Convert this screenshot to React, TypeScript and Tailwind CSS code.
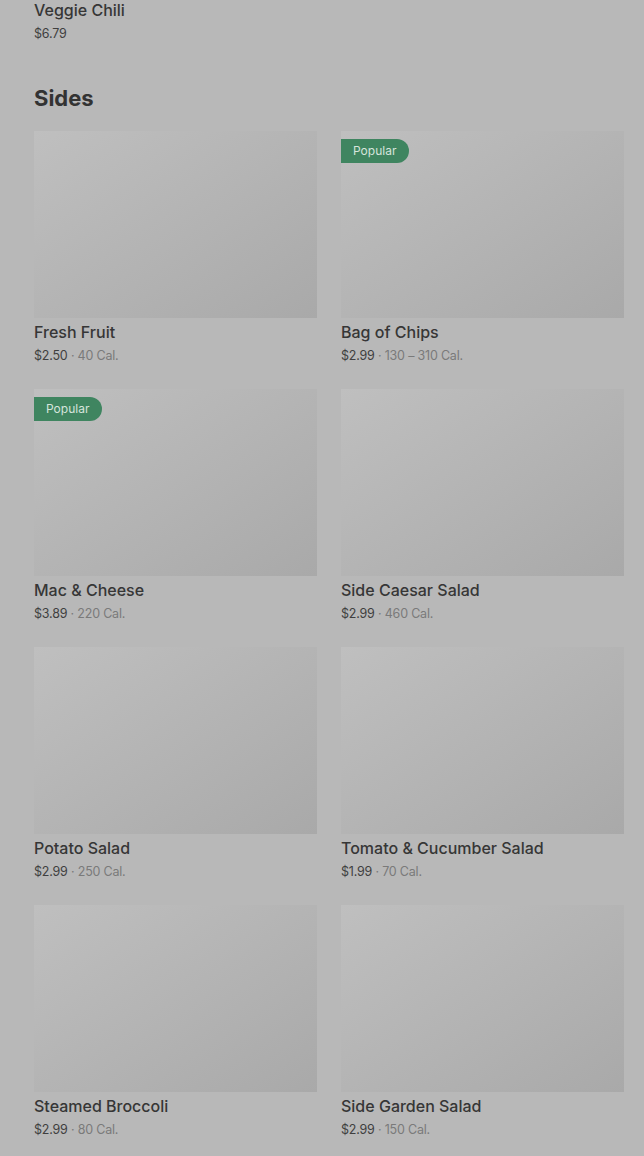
import React from 'react'

interface MenuItem {
    name: string;
    price: string;
    cal?: string;
    popular?: boolean;
}

const sides: MenuItem[] = [
    { name: 'Fresh Fruit', price: '$2.50', cal: '40 Cal.' },
    { name: 'Bag of Chips', price: '$2.99', cal: '130 – 310 Cal.', popular: true },
    { name: 'Mac & Cheese', price: '$3.89', cal: '220 Cal.', popular: true },
    { name: 'Side Caesar Salad', price: '$2.99', cal: '460 Cal.' },
    { name: 'Potato Salad', price: '$2.99', cal: '250 Cal.' },
    { name: 'Tomato & Cucumber Salad', price: '$1.99', cal: '70 Cal.' },
    { name: 'Steamed Broccoli', price: '$2.99', cal: '80 Cal.' },
    { name: 'Side Garden Salad', price: '$2.99', cal: '150 Cal.' },
]

function PriceLine({ item }: { item: MenuItem }) {
    return (
        <div className="mt-[4px] text-[12.5px] leading-[20px] tracking-[-0.2px] text-[#3f3f3f]">
            {item.price}
            {item.cal && (
                <span className="text-[#7a7a7a]"> · {item.cal}</span>
            )}
        </div>
    )
}

function ItemCard({ item }: { item: MenuItem }) {
    return (
        <div className="flex flex-col">
            <div className="relative h-[187px] bg-linear-to-br from-[#bfbfbf] to-[#a9a9a9]">
                {item.popular && (
                    <span className="absolute left-0 top-2 flex h-6 items-center rounded-r-full bg-[#3f8560] pl-3 pr-[13px] text-[12px] text-[#d6e4dc]">
                        Popular
                    </span>
                )}
            </div>
            <div className="mt-1 text-[16px] leading-[20px] font-medium text-[#363636]">{item.name}</div>
            <PriceLine item={item} />
        </div>
    )
}

export default function App() {
    return (
        <div
            className="min-h-[1156px] w-full bg-[#b8b8b8] pl-[34px] pr-[20px]"
            style={{ fontFamily: 'Inter, "Noto Sans", sans-serif' }}
        >
            <div className="grid grid-cols-2 gap-x-6">
                <div className="flex flex-col">
                    <div className="-mt-px h-px bg-[#adadad]" />
                    <div className="text-[16px] leading-[20px] font-medium text-[#363636]">Veggie Chili</div>
                    <PriceLine item={{ name: 'Veggie Chili', price: '$6.79' }} />
                </div>
            </div>

            <h2 className="mt-[40px] text-[22px] leading-[28px] font-bold text-[#333333]">Sides</h2>

            <div className="mt-[19px] grid grid-cols-2 gap-x-6 gap-y-[23px]">
                {sides.map((item) => (
                    <ItemCard key={item.name} item={item} />
                ))}
            </div>
        </div>
    )
}
